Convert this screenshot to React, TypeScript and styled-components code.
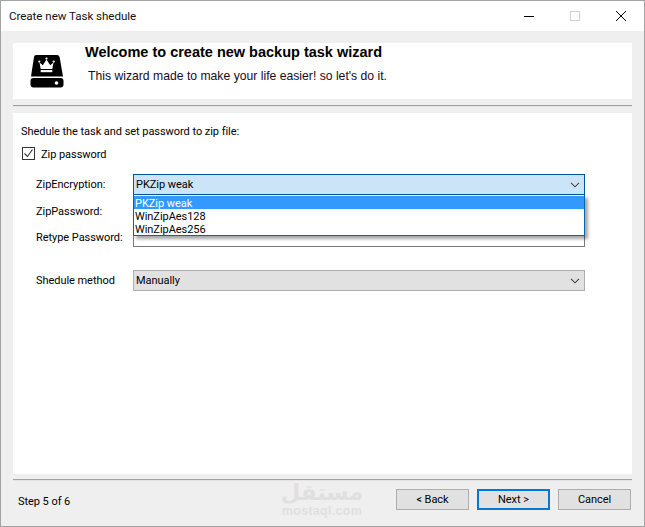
import React from "react";
import styled, { createGlobalStyle } from "styled-components";

const Global = createGlobalStyle`
  html, body { margin: 0; padding: 0; background: #efefef; }
  #root { width: 645px; height: 527px; }
  * { box-sizing: border-box; }
`;

const Win = styled.div`
  width: 645px; height: 527px;
  border: 1px solid #a3a3a3;
  background: #efefef;
  display: flex; flex-direction: column;
  font-family: Roboto, sans-serif;
  font-size: 11px;
  letter-spacing: -0.05px;
  color: #000;
  position: relative;
`;
const TitleBar = styled.div`
  height: 30px; background: #fff; flex: none;
  display: flex; align-items: center; justify-content: space-between;
  padding-left: 8px;
`;
const Title = styled.div` font-size: 11.6px; color: #111; `;
const Controls = styled.div` display: flex; height: 100%; `;
const Ctrl = styled.div`
  width: 46px; height: 100%;
  display: flex; align-items: center; justify-content: center;
  padding-bottom: 1px;
`;
const Body = styled.div`
  flex: 1; display: flex; flex-direction: column;
  padding: 12px 12px 0;
`;
const Header = styled.div`
  height: 56px; background: #fff; flex: none;
  display: flex; align-items: flex-start;
`;
const IconWrap = styled.div`
  width: 72px; flex: none; padding: 12px 0 0 17px;
  svg { display: block; }
`;
const HeaderText = styled.div`
  font-family: "Liberation Sans", Arial, sans-serif;
  letter-spacing: 0;
  display: flex; flex-direction: column;
`;
const H1 = styled.div`
  font-weight: 700; font-size: 14.5px; line-height: 16px; margin-top: 1px;
`;
const Sub = styled.div`
  font-size: 12.2px; line-height: 15px; margin: 9px 0 0 3px; color: #1a0a20;
`;
const Divider = styled.div<{ $top: number; $bottom: number }>`
  height: 2px; flex: none; background: #a0a0a0;
  border-bottom: 1px solid #e4e4e4;
  margin: ${p => p.$top}px 0 ${p => p.$bottom}px;
`;
const Content = styled.div`
  flex: none; height: 361px; background: #fff;
  padding: 11px 8px 0;
  display: flex; flex-direction: column;
`;
const Intro = styled.div` line-height: 16px; `;
const CheckRow = styled.div`
  display: flex; align-items: center; gap: 6px;
  margin: 5px 0 0 1px; height: 16px;
`;
const CheckBox = styled.span`
  width: 13px; height: 13px; border: 1px solid #333; background: #fff;
  display: flex; align-items: center; justify-content: center;
`;
const CheckText = styled.span` transform: translateY(1px); `;
const Form = styled.div`
  margin: 13px 0 0 15px; width: 549px;
  display: flex; flex-direction: column;
  position: relative;
`;
const Row = styled.div<{ $mt?: number }>`
  display: flex; align-items: center;
  margin-top: ${p => p.$mt ?? 0}px;
`;
const Label = styled.div<{ $dy?: number }>`
  width: 97px; flex: none; line-height: 16px;
  transform: translateY(${p => p.$dy ?? 0}px);
`;
const Combo = styled.div<{ $active?: boolean }>`
  width: 452px; height: 21px; flex: none;
  border: 1px solid ${p => (p.$active ? "#005499" : "#adadad")};
  background: ${p => (p.$active ? "#cce4f7" : "#e1e1e1")};
  display: flex; align-items: center; justify-content: space-between;
  padding: 1px 4px 0 2px;
  line-height: 16px;
  svg { flex: none; margin-top: -1px; }
`;
const Input = styled.div`
  width: 452px; height: 21px; flex: none;
  border: 1px solid #7a7a7a; background: #fff;
`;
const DropList = styled.div`
  position: absolute; left: 97px; top: 21px; width: 452px; height: 41px;
  background: #fff; border: 1px solid #0064b4; border-top: 0;
  box-shadow: 3px 3px 3px rgba(0,0,0,.35);
  display: flex; flex-direction: column;
  padding-top: 1px;
  z-index: 2;
`;
const Opt = styled.div<{ $sel?: boolean }>`
  height: 13px; line-height: 13px; padding: 1px 0 0 1px; flex: none;
  background: ${p => (p.$sel ? "#3399ff" : "transparent")};
  color: ${p => (p.$sel ? "#fff" : "#000")};
`;
const Footer = styled.div`
  flex: 1; display: flex; align-items: flex-start; justify-content: space-between;
  padding: 8px 1px 0 5px;
  position: relative;
`;
const Step = styled.div` line-height: 16px; margin-top: 5px; `;
const Buttons = styled.div` display: flex; gap: 8px; `;
const Btn = styled.div<{ $primary?: boolean }>`
  width: 73px; height: 21px;
  background: #e1e1e1;
  border: ${p => (p.$primary ? "2px solid #0078d7" : "1px solid #adadad")};
  display: flex; align-items: center; justify-content: center;
  line-height: 16px;
  padding-top: 1px;
`;
const Mark = styled.div`
  position: absolute; left: 270px; top: -2px; width: 78px;
  display: flex; flex-direction: column; align-items: center;
  color: #e0e0e0; pointer-events: none;
`;
const MarkAr = styled.div`
  font-family: "DejaVu Sans", sans-serif; font-weight: 700;
  font-size: 22.5px; line-height: 26px; direction: rtl;
`;
const MarkEn = styled.div`
  font-family: "Liberation Sans", sans-serif; font-weight: 700;
  font-size: 12.5px; line-height: 13px; letter-spacing: .3px;
`;

const Chevron = () => (
  <svg width="10" height="6" viewBox="0 0 10 6">
    <path d="M1 .8l4 4 4-4" fill="none" stroke="#444" strokeWidth="1.1" />
  </svg>
);

const DriveIcon = () => (
  <svg width="34" height="33" viewBox="0 0 34 33">
    <path d="M6 0h21q2 0 2.6 2L33 21.5H1L4 2Q4.4 0 6 0z" fill="#000" />
    <path d="M3.5 23h27a3 3 0 0 1 3 3v3.5a3 3 0 0 1-3 3h-27a3 3 0 0 1-3-3V26a3 3 0 0 1 3-3z" fill="#000" />
    <circle cx="26.5" cy="28" r="1.8" fill="#fff" />
    <path d="M9.5 7.5l3.3 2.8L16.5 4.5l3.7 5.8 3.3-2.8-1.2 6.5H10.7z" fill="#fff" />
    <rect x="10.7" y="15" width="11.6" height="2.2" fill="#fff" />
    <circle cx="9.3" cy="6.6" r="1.1" fill="#fff" />
    <circle cx="16.5" cy="3.6" r="1.1" fill="#fff" />
    <circle cx="23.7" cy="6.6" r="1.1" fill="#fff" />
  </svg>
);

export default function App() {
  return (
    <>
      <Global />
      <Win>
        <TitleBar>
          <Title>Create new Task shedule</Title>
          <Controls>
            <Ctrl>
              <svg width="10" height="10" viewBox="0 0 10 10"><path d="M0 5.5h10" stroke="#000" strokeWidth="1" /></svg>
            </Ctrl>
            <Ctrl>
              <svg width="10" height="10" viewBox="0 0 10 10"><rect x=".5" y=".5" width="9" height="9" fill="none" stroke="#ccd4d4" /></svg>
            </Ctrl>
            <Ctrl>
              <svg width="10" height="10" viewBox="0 0 10 10"><path d="M0 0l10 10M10 0L0 10" stroke="#000" strokeWidth="1" /></svg>
            </Ctrl>
          </Controls>
        </TitleBar>
        <Body>
          <Header>
            <IconWrap><DriveIcon /></IconWrap>
            <HeaderText>
              <H1>Welcome to create new backup task wizard</H1>
              <Sub>This wizard made to make your life easier! so let's do it.</Sub>
            </HeaderText>
          </Header>
          <Divider $top={6} $bottom={6} />
          <Content>
            <Intro>Shedule the task and set password to zip file:</Intro>
            <CheckRow>
              <CheckBox>
                <svg width="11" height="11" viewBox="0 0 11 11"><path d="M1.5 5.5l3 3 5-7" fill="none" stroke="#333" strokeWidth="1.1" /></svg>
              </CheckBox>
              <CheckText>Zip password</CheckText>
            </CheckRow>
            <Form>
              <Row>
                <Label>ZipEncryption:</Label>
                <Combo $active>PKZip weak<Chevron /></Combo>
              </Row>
              <Row $mt={5}>
                <Label $dy={1}>ZipPassword:</Label>
                <Input />
              </Row>
              <Row $mt={5}>
                <Label $dy={1}>Retype Password:</Label>
                <Input />
              </Row>
              <Row $mt={23}>
                <Label>Shedule method</Label>
                <Combo>Manually<Chevron /></Combo>
              </Row>
              <DropList>
                <Opt $sel>PKZip weak</Opt>
                <Opt>WinZipAes128</Opt>
                <Opt>WinZipAes256</Opt>
              </DropList>
            </Form>
          </Content>
          <Divider $top={5} $bottom={0} />
          <Footer>
            <Step>Step 5 of 6</Step>
            <Mark>
              <MarkAr>مستقل</MarkAr>
              <MarkEn>mostaql.com</MarkEn>
            </Mark>
            <Buttons>
              <Btn>&lt; Back</Btn>
              <Btn $primary>Next &gt;</Btn>
              <Btn>Cancel</Btn>
            </Buttons>
          </Footer>
        </Body>
      </Win>
    </>
  );
}
